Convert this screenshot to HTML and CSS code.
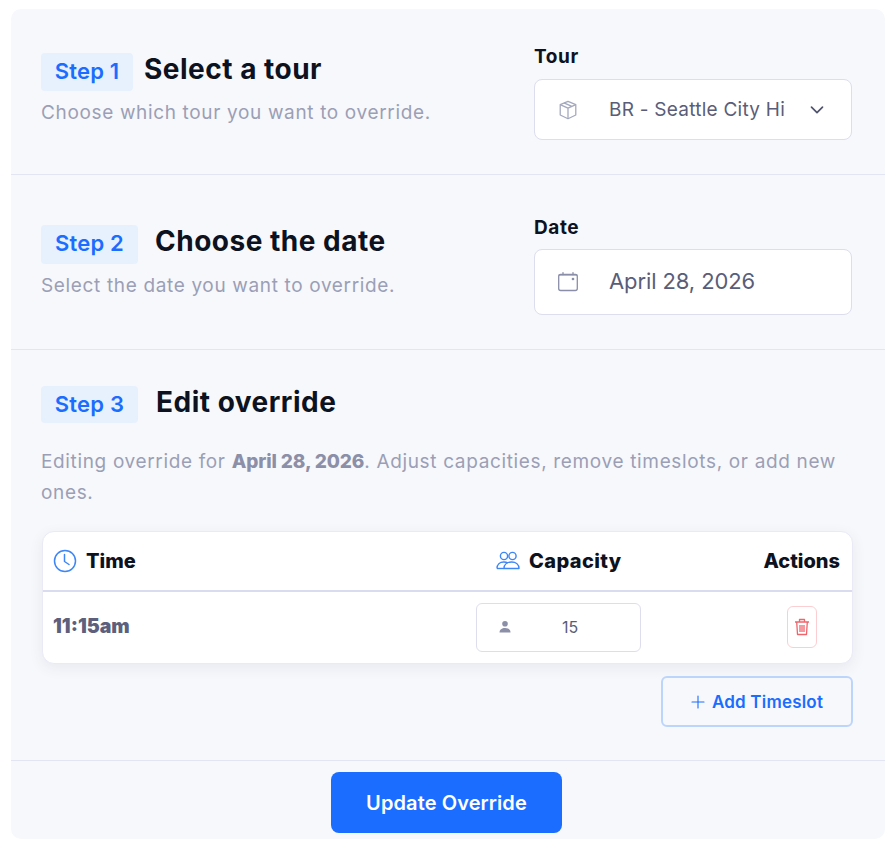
FILE: index.html
```html
<!DOCTYPE html>
<html lang="en">
<head>
  <meta charset="UTF-8" />
  <title>Update Override</title>
  <link rel="stylesheet" href="styles.css">
</head>
<body>
  <div class="card">
    <!-- Step 1 -->
    <section class="section section-tour">
      <div class="intro intro-tour">
        <div class="step-head">
          <span class="step-badge badge-tour">Step 1</span>
          <h2>Select a tour</h2>
        </div>
        <p class="hint">Choose which tour you want to override.</p>
      </div>
      <div class="field">
        <label>Tour</label>
        <div class="input input-tour">
          <svg class="input-icon" width="22" height="22" viewBox="0 0 24 24" fill="none" stroke="#a4a8bf" stroke-width="1.4" stroke-linejoin="round"><path d="M12 2.5l8.5 3.6v11.4L12 21.5l-8.5-4V6.100z"/><path d="M3.500 6.100l8.500 3.900 8.500-3.900M12 10v11.500M7.600 4.300l8.600 3.800"/></svg>
          <span class="input-text tour-text">BR - Seattle City Hi</span>
          <svg class="chevron" width="16" height="16" viewBox="0 0 16 16" fill="none" stroke="#50536d" stroke-width="1.700" stroke-linecap="round" stroke-linejoin="round"><path d="M2.500 5.200L8 10.700l5.500-5.500"/></svg>
        </div>
      </div>
    </section>

    <!-- Step 2 -->
    <section class="section section-date">
      <div class="intro intro-date">
        <div class="step-head">
          <span class="step-badge badge-date">Step 2</span>
          <h2>Choose the date</h2>
        </div>
        <p class="hint">Select the date you want to override.</p>
      </div>
      <div class="field">
        <label>Date</label>
        <div class="input input-date">
          <svg class="input-icon" width="22" height="22" viewBox="0 0 22 22" fill="none" stroke="#8b8ea8" stroke-width="1.300" stroke-linecap="round"><rect x="1.700" y="3.500" width="18.600" height="16" rx="2"/><path d="M6 1.600v1.900M16 1.600v1.900"/><path d="M2 4h18" stroke-width="1"/><circle cx="16" cy="8" r=".7" fill="#8b8ea8"/></svg>
          <span class="input-text date-text">April 28, 2026</span>
        </div>
      </div>
    </section>

    <!-- Step 3 -->
    <section class="section-edit">
      <div class="step-head">
        <span class="step-badge badge-edit">Step 3</span>
        <h2>Edit override</h2>
      </div>
      <p class="hint edit-hint">Editing override for <b>April 28, 2026</b>. Adjust capacities, remove timeslots, or add new ones.</p>

      <div class="table">
        <div class="table-head">
          <div class="col-time">
            <svg width="24" height="24" viewBox="0 0 24 24" fill="none" stroke="#3d86f5" stroke-width="1.500" stroke-linecap="round" stroke-linejoin="round"><circle cx="12" cy="12" r="10.500"/><path d="M11.500 5.500v7l4.500 3"/></svg>
            <span>Time</span>
          </div>
          <div class="col-capacity">
            <svg width="24" height="20" viewBox="0 0 24 20" fill="none" stroke="#3d86f5" stroke-width="1.400" stroke-linejoin="round"><circle cx="8" cy="5" r="3.600"/><circle cx="16.500" cy="5" r="3.600"/><path d="M1 17.500c0-4 2.800-6.500 6.800-6.500 1.700 0 3 .4 4.200 1.200M8 17.500c0-4 3-6.500 7.500-6.500s7.500 2.500 7.500 6.500z"/><path d="M1 17.500h7"/></svg>
            <span class="capacity-label">Capacity</span>
          </div>
          <div class="col-actions">Actions</div>
        </div>
        <div class="table-row">
          <div class="col-time slot-time">11:15am</div>
          <div class="col-capacity">
            <div class="capacity-input">
              <svg width="14" height="14" viewBox="0 0 14 14" fill="#8c8fa8"><circle cx="7" cy="3.800" r="2.800"/><path d="M1.500 12.500c0-3 2.400-4.500 5.500-4.500s5.500 1.500 5.500 4.500z"/></svg>
              <span>15</span>
            </div>
          </div>
          <div class="col-actions">
            <button class="delete-btn">
              <svg width="16" height="18" viewBox="0 0 16 18" fill="none" stroke="#f0646c" stroke-width="1.300" stroke-linejoin="round"><path d="M1 4h14M5.500 3.500V1.500h5v2M2.700 4l.8 12.500h9L13.300 4M6 7v7M8 7v7M10 7v7"/></svg>
            </button>
          </div>
        </div>
      </div>

      <div class="add-row">
        <button class="add-btn">
          <svg width="14" height="14" viewBox="0 0 14 14" fill="none" stroke="#1a6dff" stroke-width="1.100" stroke-linecap="round"><path d="M7 1v12M1 7h12"/></svg>
          Add Timeslot
        </button>
      </div>
    </section>

    <!-- Footer -->
    <div class="footer">
      <button class="submit-btn">Update Override</button>
    </div>
  </div>
</body>
</html>
```

FILE: styles.css
```css
body {
  margin: 0;
  background: #fff;
  font-family: Inter, "Liberation Sans", sans-serif;
  color: #0d1220;
}

.card {
  width: 874px;
  height: 830px;
  margin: 9px 0 0 11px;
  background: #f7f8fb;
  border-radius: 10px;
  display: flex;
  flex-direction: column;
}

/* Steps */
.section {
  display: flex;
  justify-content: space-between;
  padding-left: 30px;
  padding-right: 33px;
  border-bottom: 1px solid #e4e5f3;
}

.section-tour {
  height: 166px;
  box-sizing: border-box;
  padding-top: 37px;
}

.section-date {
  height: 175px;
  box-sizing: border-box;
  padding-top: 42px;
}

.intro-tour {
  padding-top: 7px;
}

.intro-date {
  padding-top: 8px;
}

.step-head {
  display: flex;
  align-items: flex-start;
}

.step-head h2 {
  margin: 1px 0 0;
  font-size: 28px;
  line-height: 30px;
  font-weight: 700;
  letter-spacing: 0.5px;
}

.step-badge {
  background: #e7f0fd;
  color: #1a6dff;
  border-radius: 4px;
  font-size: 22px;
  font-weight: 600;
  letter-spacing: 0.2px;
  text-align: center;
  box-sizing: border-box;
}

.badge-tour {
  width: 92px;
  height: 38px;
  line-height: 36px;
  margin-right: 11px;
}

.badge-date {
  width: 97px;
  height: 39px;
  line-height: 37px;
  margin-right: 17px;
}

.badge-edit {
  width: 97px;
  height: 37px;
  line-height: 36px;
  margin-right: 18px;
}

.hint {
  margin: 7px 0 0;
  font-size: 19px;
  line-height: 30px;
  color: #9b9fb6;
  font-weight: 400;
  letter-spacing: 0.65px;
}

.hint b {
  color: #8c8fa8;
  font-weight: 800;
  letter-spacing: -0.1px;
}

.edit-hint {
  margin-top: 23px;
  line-height: 31px;
}

/* Fields */
.field {
  width: 318px;
}

.field label {
  display: block;
  font-size: 19px;
  line-height: 22px;
  font-weight: 700;
  letter-spacing: 0.6px;
  margin-bottom: 11px;
}

.section-date .field label {
  margin-bottom: 10px;
}

.input {
  display: flex;
  align-items: center;
  background: #fff;
  border: 1px solid #dcdeed;
  border-radius: 8px;
  box-sizing: border-box;
  padding-left: 22px;
}

.input-tour {
  height: 61px;
}

.input-date {
  height: 66px;
}

.input-text {
  margin-left: 30px;
  color: #5a5d78;
}

.tour-text {
  width: 176px;
  white-space: nowrap;
  font-size: 19px;
  letter-spacing: 0.25px;
}

.date-text {
  font-size: 22px;
  letter-spacing: -0.1px;
  padding-bottom: 2px;
}

.chevron {
  margin-left: 24px;
}

/* Edit section */
.section-edit {
  padding: 36px 32px 0 30px;
  height: 411px;
  box-sizing: border-box;
  border-bottom: 1px solid #e4e5f3;
}

.table {
  margin-top: 23px;
  margin-left: 1px;
  width: 811px;
  height: 133px;
  box-sizing: border-box;
  background: #fff;
  border: 1px solid #e9eaf5;
  border-radius: 12px;
  box-shadow: 0 4px 14px rgba(60, 65, 110, 0.08);
}

.table-head,
.table-row {
  display: flex;
  align-items: center;
}

.table-head {
  height: 58px;
  border-bottom: 2px solid #d9dbee;
  font-size: 20px;
  font-weight: 800;
}

.table-row {
  height: 71px;
}

.col-time {
  width: 433px;
  padding-left: 10px;
  box-sizing: border-box;
  display: flex;
  align-items: center;
  gap: 9px;
}

.col-capacity {
  width: 245px;
  display: flex;
  align-items: center;
  gap: 8px;
}

.capacity-label {
  margin-left: 1px;
  letter-spacing: 0.4px;
}

.col-actions {
  flex: 1;
  display: flex;
  justify-content: flex-end;
  padding-right: 12px;
}

.table-head .col-capacity {
  padding-left: 20px;
  box-sizing: border-box;
}

.slot-time {
  font-size: 19.5px;
  font-weight: 900;
  color: #5d5f7c;
  padding-bottom: 3px;
}

.capacity-input {
  width: 165px;
  height: 49px;
  box-sizing: border-box;
  border: 1px solid #dcdeed;
  border-radius: 6px;
  display: flex;
  align-items: center;
  padding-left: 21px;
  font-size: 16px;
  color: #5a5d78;
  margin-bottom: 1px;
}

.capacity-input span {
  margin-left: 50px;
}

.delete-btn {
  width: 30px;
  height: 42px;
  padding: 0;
  margin: 0 23px 2px 0;
  background: #fff;
  border: 1px solid #fbcfd2;
  border-radius: 6px;
  display: flex;
  align-items: center;
  justify-content: center;
}

.add-row {
  display: flex;
  justify-content: flex-end;
  margin-top: 12px;
}

.add-btn {
  width: 192px;
  height: 51px;
  box-sizing: border-box;
  padding-left: 6px;
  background: #f7f8fb;
  border: 2px solid #bcd5fb;
  border-radius: 6px;
  color: #1a6dff;
  font-family: inherit;
  font-size: 17px;
  font-weight: 600;
  letter-spacing: 0.2px;
  display: flex;
  align-items: center;
  justify-content: center;
  gap: 7px;
}

/* Footer */
.footer {
  display: flex;
  justify-content: center;
  padding: 11px 3px 0 0;
}

.submit-btn {
  width: 231px;
  height: 61px;
  background: #1a6dff;
  border: none;
  border-radius: 8px;
  color: #fff;
  font-family: inherit;
  font-size: 20px;
  font-weight: 600;
  letter-spacing: 0.1px;
}
```
